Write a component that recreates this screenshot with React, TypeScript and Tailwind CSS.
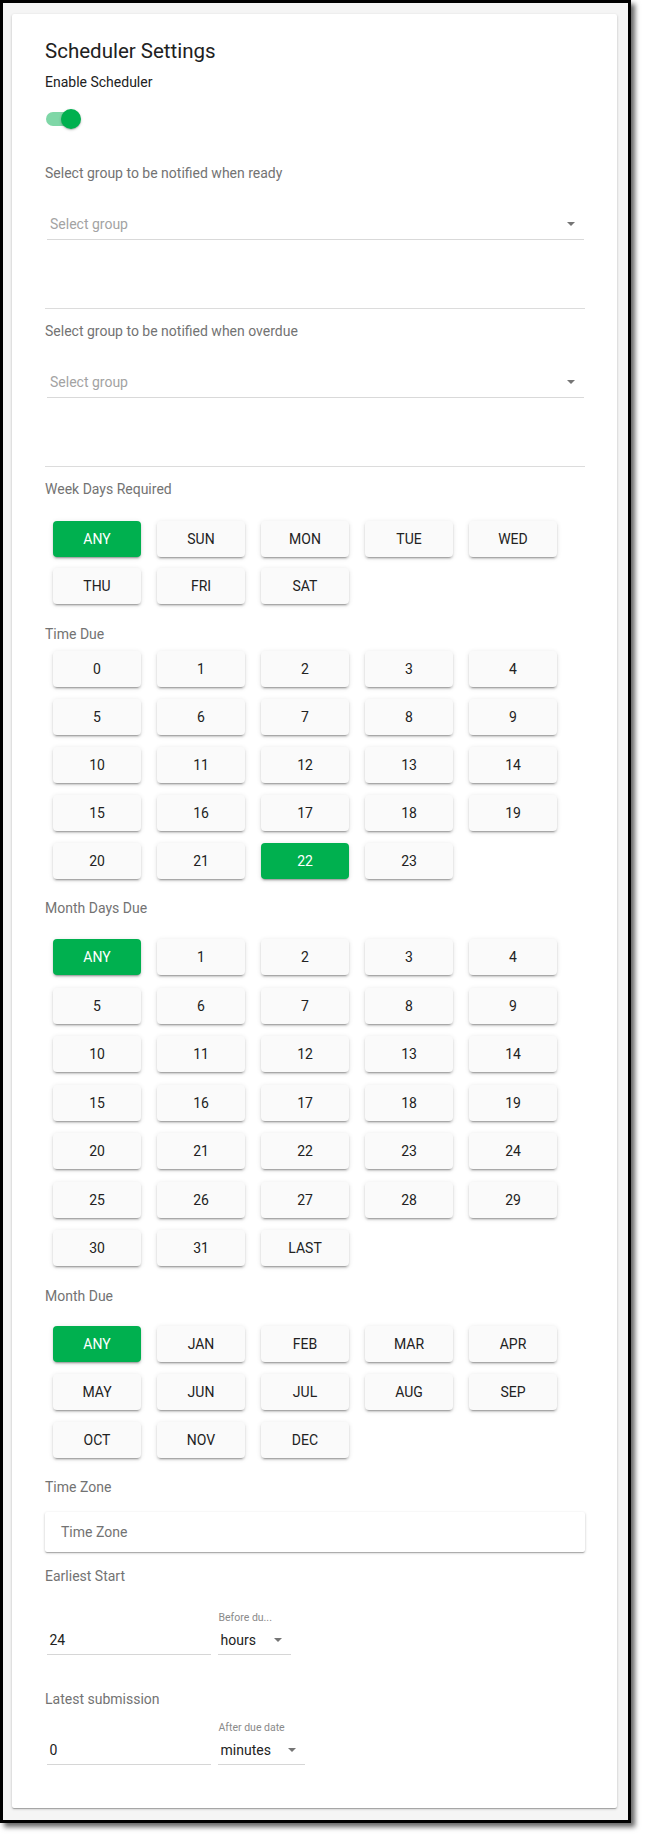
import React from "react";

function Btn({ label, active }: { label: string; active?: boolean }) {
  return (
    <div
      className={
        "w-[88px] h-9 rounded-[4px] flex items-center justify-center text-[14px] font-normal leading-none uppercase shadow-[0_3px_1px_-2px_rgba(0,0,0,0.2),0_2px_2px_0_rgba(0,0,0,0.14),0_1px_5px_0_rgba(0,0,0,0.12)] " +
        (active ? "bg-[#00b04f] text-white" : "bg-[#fafafa] text-[#222222]")
      }
    >
      {label}
    </div>
  );
}

function BtnGrid({ items, active, gapY }: { items: string[]; active: string; gapY: string }) {
  return (
    <div className={"flex flex-wrap gap-x-4 pl-2 " + gapY}>
      {items.map((it) => (
        <Btn key={it} label={it} active={it === active} />
      ))}
    </div>
  );
}

function Arrow() {
  return (
    <svg width="8" height="4" viewBox="0 0 8 4" className="block">
      <polygon points="0,0 8,0 4,4" fill="#757575" />
    </svg>
  );
}

function Label({ children, className = "" }: { children: React.ReactNode; className?: string }) {
  return <div className={"text-[14px] leading-5 text-[#737373] " + className}>{children}</div>;
}

function GroupSelect({ className = "" }: { className?: string }) {
  return (
    <div className={"relative ml-[1.5px] w-[537px] pl-[3.5px] pb-[5px] border-b border-[#d9d9d9] " + className}>
      <div className="text-[14px] leading-5 text-[#a3a3a3]">Select group</div>
      <div className="absolute right-[8.5px] top-[8px]">
        <Arrow />
      </div>
    </div>
  );
}

function NumberRow({
  value,
  hint,
  unit,
  selectW,
  className = "",
}: {
  value: string;
  hint: string;
  unit: string;
  selectW: string;
  className?: string;
}) {
  return (
    <div className={"flex items-end gap-[7.5px] ml-[1.5px] " + className}>
      <div className="w-[164px] pl-[3px] pb-[3.5px] border-b border-[#d6d6d6] text-[14px] leading-5 text-[#222222]">
        {value}
      </div>
      <div className="flex flex-col">
        <div className="h-3 text-[10.5px] leading-3 text-[#8a8a8a] pl-[0.5px] whitespace-nowrap">{hint}</div>
        <div className={"relative mt-[6px] pl-[2.5px] pb-[3.5px] border-b border-[#d6d6d6] text-[14px] leading-5 text-[#222222] " + selectW}>
          {unit}
          <div className="absolute right-[8.5px] top-[8px]">
            <Arrow />
          </div>
        </div>
      </div>
    </div>
  );
}

export default function App() {
  const week = ["ANY", "SUN", "MON", "TUE", "WED", "THU", "FRI", "SAT"];
  const hours = Array.from({ length: 24 }, (_, i) => String(i));
  const monthDays = ["ANY", ...Array.from({ length: 31 }, (_, i) => String(i + 1)), "LAST"];
  const months = ["ANY", "JAN", "FEB", "MAR", "APR", "MAY", "JUN", "JUL", "AUG", "SEP", "OCT", "NOV", "DEC"];

  return (
    <div className="w-[645px] h-[1837px] bg-white font-['Roboto',sans-serif]">
      <div className="w-[631px] h-[1823px] border-[3px] border-black bg-[#f5f5f5] shadow-[4px_4px_5px_rgba(0,0,0,0.6)] pt-[11px] pl-[9px]">
        <div className="w-[605px] h-[1794px] bg-white rounded-[2px] shadow-[0_1px_3px_0_rgba(0,0,0,0.2),0_1px_1px_0_rgba(0,0,0,0.14),0_2px_1px_-1px_rgba(0,0,0,0.12)] pt-[25px] pl-[33px] pr-[32px]">
          <div className="text-[20.5px] leading-6 text-[#212121]">Scheduler Settings</div>
          <div className="mt-[9px] text-[14px] leading-5 text-[#212121]">Enable Scheduler</div>

          <div className="relative mt-[17px] h-5 w-[40px]">
            <div className="absolute left-px top-[3px] w-[33px] h-[14px] rounded-full bg-[#7fd7a7]" />
            <div className="absolute left-4 top-0 w-5 h-5 rounded-full bg-[#00b04f] shadow-[0_1px_3px_rgba(0,0,0,0.2),0_1px_1px_rgba(0,0,0,0.14)]" />
          </div>

          <Label className="mt-[34px]">Select group to be notified when ready</Label>
          <GroupSelect className="mt-[31px]" />
          <div className="mt-[68px] h-px bg-[#dcdcdc]" />

          <Label className="mt-[12px]">Select group to be notified when overdue</Label>
          <GroupSelect className="mt-[31px]" />
          <div className="mt-[68px] h-px bg-[#dcdcdc]" />

          <Label className="mt-[12px]">Week Days Required</Label>
          <div className="mt-[22px]">
            <BtnGrid items={week} active="ANY" gapY="gap-y-[11px]" />
          </div>

          <Label className="mt-[20px]">Time Due</Label>
          <div className="mt-[7px]">
            <BtnGrid items={hours} active="22" gapY="gap-y-3" />
          </div>

          <Label className="mt-[19px]">Month Days Due</Label>
          <div className="mt-[21px]">
            <BtnGrid items={monthDays} active="ANY" gapY="gap-y-[12.5px]" />
          </div>

          <Label className="mt-[20px]">Month Due</Label>
          <div className="mt-[20px]">
            <BtnGrid items={months} active="ANY" gapY="gap-y-3" />
          </div>

          <Label className="mt-[19px]">Time Zone</Label>
          <div className="mt-[15px] h-10 flex items-center pl-4 bg-white rounded-[2px] shadow-[0_1px_3px_0_rgba(0,0,0,0.2),0_1px_1px_0_rgba(0,0,0,0.14),0_2px_1px_-1px_rgba(0,0,0,0.12)]">
            <span className="text-[14px] leading-5 text-[#737373]">Time Zone</span>
          </div>

          <Label className="mt-[14px]">Earliest Start</Label>
          <NumberRow className="mt-[26px]" value="24" hint="Before du..." unit="hours" selectW="w-[72.5px]" />

          <Label className="mt-[34.5px]">Latest submission</Label>
          <NumberRow className="mt-[13px]" value="0" hint="After due date" unit="minutes" selectW="w-[86.5px]" />
        </div>
      </div>
    </div>
  );
}
